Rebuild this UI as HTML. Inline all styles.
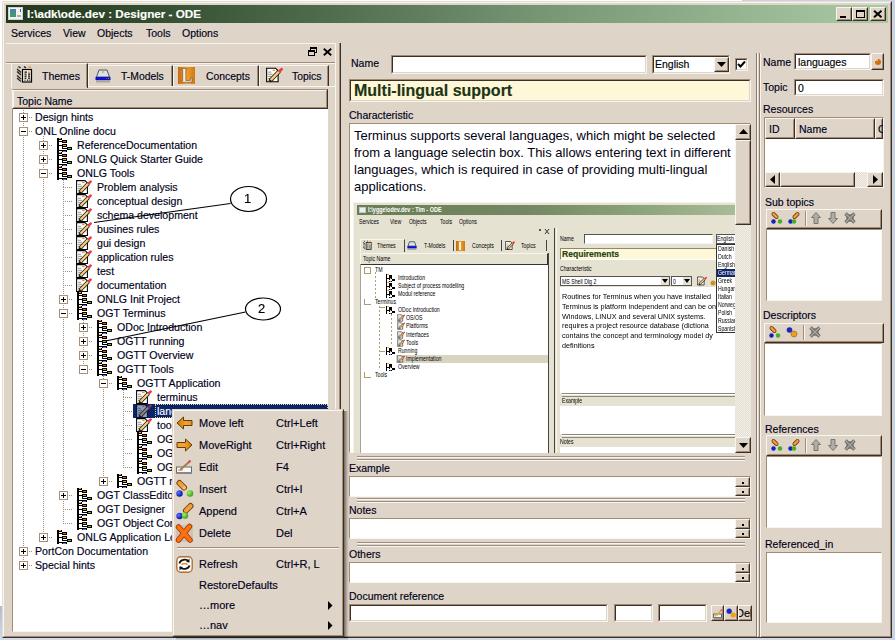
<!DOCTYPE html>
<html><head><meta charset="utf-8">
<style>
*{box-sizing:border-box;margin:0;padding:0}
html,body{width:895px;height:640px;overflow:hidden;background:#fff;font-family:"Liberation Sans",sans-serif;font-size:11px;color:#000018}
.a{position:absolute}
.t{position:absolute;white-space:nowrap;line-height:14px;-webkit-text-stroke:0.15px currentColor}
svg{position:absolute;overflow:visible}
</style></head><body>
<svg width="0" height="0" style="position:absolute">
<defs>
<symbol id="hier" viewBox="0 0 15 14" shape-rendering="crispEdges">
 <rect x="0" y="0" width="1.5" height="14" fill="#000"/>
 <rect x="0" y="0" width="5" height="2" fill="#000"/><rect x="2" y="0" width="2" height="1" fill="#f8a020"/>
 <rect x="2" y="3" width="3" height="1" fill="#000"/>
 <rect x="5" y="2" width="5" height="3" fill="#000"/><rect x="6" y="3" width="3" height="1" fill="#f05020"/>
 <rect x="2" y="7" width="3" height="1" fill="#000"/>
 <rect x="5" y="6" width="5" height="3" fill="#000"/><rect x="6" y="7" width="3" height="1" fill="#d8a818"/>
 <rect x="5" y="9" width="1" height="2" fill="#000"/><rect x="6" y="10" width="4" height="1" fill="#000"/>
 <rect x="10" y="9" width="5" height="3" fill="#000"/><rect x="11" y="10" width="3" height="1" fill="#88b020"/>
 <rect x="2" y="12" width="3" height="1" fill="#000"/>
 <rect x="5" y="12" width="5" height="2" fill="#000"/><rect x="6" y="13" width="3" height="1" fill="#5080f0"/>
</symbol>
<symbol id="note" viewBox="0 0 16 14">
 <path d="M0.6 0.6 H9 L11.4 3 V13.4 H0.6 Z" fill="#fff" stroke="#000" stroke-width="1.05"/>
 <path d="M2 4.3h3M2 6.3h4M2 8.3h3.5M2 10.3h3M2 12.3h5" stroke="#8a8a8a" stroke-width="0.9"/>
 <path d="M6.2 2.6h2.4" stroke="#f08010" stroke-width="1"/>
 <path d="M3.8 12.4 L12.6 3.4" stroke="#2a2010" stroke-width="3.8"/>
 <path d="M4.4 11.8 L12.4 3.6" stroke="#f6d080" stroke-width="2.2"/>
 <path d="M3.4 13.2 L4.6 12" stroke="#111" stroke-width="1.8"/>
 <path d="M12.2 4 L13.2 3" stroke="#8090a0" stroke-width="2.6"/>
 <path d="M13 3.2 L14.6 1.6" stroke="#e83a4a" stroke-width="2.6" stroke-linecap="round"/>
</symbol>
<symbol id="ledger" viewBox="0 0 18 18">
<path d="M2 4 L6 7.5 M2 6.5 L6 10 M2 10.5 L6 14 M2 13 L6 16.5" stroke="#222" stroke-width="1.3"/>
<path d="M2 2.5 L6 6 M2 8.5 L6 12 M2 11.8 L6 15.3" stroke="#f0a050" stroke-width="0.8" stroke-dasharray="1 1"/>
<path d="M3.5 1.5 L5.5 3 M9 1.5 L11 3" stroke="#222" stroke-width="1.4"/>
<path d="M13.5 2.2 H16" stroke="#f08a10" stroke-width="1.4"/>
<rect x="7.5" y="4.5" width="9" height="12.5" fill="#f6eee0" stroke="#000" stroke-width="1.2"/>
<path d="M9.5 7.2h2.5M9.5 9.2h2M13 9.2h2.2M9.5 11.2h2.2M13 11.2h2M9.5 13.2h2M13 13.2h2.2M9.5 15.2h1M11.8 15.2h1.5M14.3 15.2h1" stroke="#111" stroke-width="1.2"/>
<path d="M13 7.2h2.2" stroke="#f08a10" stroke-width="1.3"/>
</symbol>
</defs></svg>

<div class="a" style="left:0px;top:606px;width:2px;height:34px;background:linear-gradient(#b0bccc,#d0d8e6)"></div>
<div class="a" style="left:0px;top:638px;width:895px;height:2px;background:#d0dae8"></div>
<div class="a" style="left:892px;top:0px;width:3px;height:640px;background:#c8d4e6"></div>
<div class="a" style="left:742px;top:0px;width:153px;height:1px;background:#c8d4e6"></div>
<div class="a" style="left:2px;top:1px;width:890px;height:637px;background:#ded4c8;border-style:solid;border-width:1px;border-color:#e6ddd2 #3a3028 #3a3028 #e6ddd2"></div>
<div class="a" style="left:3px;top:2px;width:888px;height:635px;border-style:solid;border-width:1px;border-color:#f8f4ee #a48c74 #a48c74 #f8f4ee"></div>
<div class="a" style="left:6px;top:5px;width:882px;height:18px;background:linear-gradient(90deg,#22361e 0%,#2c4428 10%,#4e6a4c 35%,#759573 60%,#98b894 85%,#aacaa4 100%)"></div>
<div class="a" style="left:8px;top:7px;width:15px;height:13px;background:#f2f2f2;border:1px solid #d0d0d0"></div>
<div class="a" style="left:10px;top:9px;width:6px;height:8px;background:linear-gradient(#4a80b0,#40a060)"></div>
<div class="a" style="left:20px;top:9px;width:1px;height:3px;background:#2a60c0"></div>
<div class="a" style="left:17px;top:15px;width:4px;height:2px;background:#b0b0b0"></div>
<div class="t" style="left:27px;top:7px;color:#fff;font-weight:bold;font-size:11.7px">I:\adk\ode.dev : Designer - ODE</div>
<div class="a" style="left:836px;top:7px;width:16px;height:14px;background:#ded4c8;border-style:solid;border-width:1px;border-color:#f8f4ee #3a3028 #3a3028 #f8f4ee"></div>
<div class="a" style="left:837px;top:8px;width:14px;height:12px;border-style:solid;border-width:1px;border-color:#ded4c8 #a48c74 #a48c74 #ded4c8"></div>
<div class="a" style="left:852px;top:7px;width:16px;height:14px;background:#ded4c8;border-style:solid;border-width:1px;border-color:#f8f4ee #3a3028 #3a3028 #f8f4ee"></div>
<div class="a" style="left:853px;top:8px;width:14px;height:12px;border-style:solid;border-width:1px;border-color:#ded4c8 #a48c74 #a48c74 #ded4c8"></div>
<div class="a" style="left:870px;top:7px;width:16px;height:14px;background:#ded4c8;border-style:solid;border-width:1px;border-color:#f8f4ee #3a3028 #3a3028 #f8f4ee"></div>
<div class="a" style="left:871px;top:8px;width:14px;height:12px;border-style:solid;border-width:1px;border-color:#ded4c8 #a48c74 #a48c74 #ded4c8"></div>
<div class="a" style="left:840px;top:16px;width:6px;height:2px;background:#000"></div>
<div class="a" style="left:856px;top:10px;width:9px;height:8px;border:1px solid #000;border-top-width:2px"></div>
<svg style="left:873px;top:10px" width="10" height="8"><path d="M1 0.8 L8.5 7.2 M8.5 0.8 L1 7.2" stroke="#000" stroke-width="2"/></svg>
<div class="t" style="left:11px;top:26px;font-size:10.5px">Services</div>
<div class="t" style="left:63px;top:26px;font-size:10.5px">View</div>
<div class="t" style="left:97px;top:26px;font-size:10.5px">Objects</div>
<div class="t" style="left:146px;top:26px;font-size:10.5px">Tools</div>
<div class="t" style="left:182px;top:26px;font-size:10.5px">Options</div>
<div class="a" style="left:6px;top:43px;width:330px;height:1px;background:#f8f4ee"></div>
<div class="a" style="left:335px;top:43px;width:1px;height:594px;background:#f8f4ee"></div>
<svg style="left:308px;top:47px" width="9" height="10" shape-rendering="crispEdges"><rect x="2" y="0" width="7" height="2" fill="#000"/><rect x="8" y="0" width="1" height="6" fill="#000"/><rect x="6" y="5" width="3" height="1" fill="#000"/><rect x="0" y="3" width="7" height="2" fill="#000"/><rect x="0" y="3" width="1" height="6" fill="#000"/><rect x="6" y="3" width="1" height="6" fill="#000"/><rect x="0" y="8" width="7" height="1" fill="#000"/><rect x="2" y="2" width="1" height="1" fill="#000"/></svg>
<svg style="left:323px;top:48px" width="9" height="8"><path d="M0.8 0.8 L8.2 7.2 M8.2 0.8 L0.8 7.2" stroke="#000" stroke-width="1.8"/></svg>
<div class="a" style="left:6px;top:62px;width:329px;height:1px;background:#a48c74"></div>
<div class="a" style="left:6px;top:63px;width:329px;height:1px;background:#f8f4ee"></div>
<div class="a" style="left:88px;top:65px;width:85px;height:21px;background:#ded4c8;border-style:solid;border-width:1px 1px 0 1px;border-color:#f8f4ee #3a3028 #ded4c8 #f8f4ee"></div>
<div class="a" style="left:171px;top:66px;width:1px;height:20px;background:#a48c74"></div>
<div class="a" style="left:173px;top:65px;width:86px;height:21px;background:#ded4c8;border-style:solid;border-width:1px 1px 0 1px;border-color:#f8f4ee #3a3028 #ded4c8 #f8f4ee"></div>
<div class="a" style="left:257px;top:66px;width:1px;height:20px;background:#a48c74"></div>
<div class="a" style="left:259px;top:65px;width:70px;height:21px;background:#ded4c8;border-style:solid;border-width:1px 1px 0 1px;border-color:#f8f4ee #3a3028 #ded4c8 #f8f4ee"></div>
<div class="a" style="left:327px;top:66px;width:1px;height:20px;background:#a48c74"></div>
<div class="a" style="left:11px;top:63px;width:77px;height:25px;background:#ded4c8;border-style:solid;border-width:1px 1px 0 1px;border-color:#f8f4ee #3a3028 #ded4c8 #f8f4ee"></div>
<div class="a" style="left:86px;top:64px;width:1px;height:23px;background:#a48c74"></div>
<div class="a" style="left:88px;top:86px;width:247px;height:1px;background:#f8f4ee"></div>
<svg style="left:15px;top:65px" width="18" height="18" viewBox="0 0 18 18">
<path d="M2 4 L6 7.5 M2 6.5 L6 10 M2 10.5 L6 14 M2 13 L6 16.5" stroke="#222" stroke-width="1.3"/>
<path d="M2 2.5 L6 6 M2 8.5 L6 12 M2 11.8 L6 15.3" stroke="#f0a050" stroke-width="0.8" stroke-dasharray="1 1"/>
<path d="M3.5 1.5 L5.5 3 M9 1.5 L11 3" stroke="#222" stroke-width="1.4"/>
<path d="M13.5 2.2 H16" stroke="#f08a10" stroke-width="1.4"/>
<rect x="7.5" y="4.5" width="9" height="12.5" fill="#f6eee0" stroke="#000" stroke-width="1.2"/>
<path d="M9.5 7.2h2.5M9.5 9.2h2M13 9.2h2.2M9.5 11.2h2.2M13 11.2h2M9.5 13.2h2M13 13.2h2.2M9.5 15.2h1M11.8 15.2h1.5M14.3 15.2h1" stroke="#111" stroke-width="1.2"/>
<path d="M13 7.2h2.2" stroke="#f08a10" stroke-width="1.3"/>
</svg>
<div class="t" style="left:42px;top:69px;font-size:10.5px">Themes</div>
<svg style="left:95px;top:69px" width="16" height="14" viewBox="0 0 16 14">
<path d="M4 1 H12 L14.5 8 H1.5 Z" fill="#d8e4ea" stroke="#555" stroke-width="1"/>
<ellipse cx="8" cy="3" rx="1.5" ry="0.8" fill="#e0a040"/>
<rect x="0.5" y="8" width="15" height="3" fill="#1010d0"/>
<rect x="11" y="9" width="1.2" height="1" fill="#e02020"/><rect x="13" y="9" width="1.2" height="1" fill="#20d020"/>
<rect x="1" y="11" width="14" height="2.5" fill="#888" opacity="0.6"/>
</svg>
<div class="t" style="left:121px;top:70px;font-size:10.4px">T-Models</div>
<svg style="left:178px;top:67px" width="17" height="17" viewBox="0 0 17 17">
<defs><linearGradient id="cg" x1="0" x2="1"><stop offset="0" stop-color="#c86808"/><stop offset=".5" stop-color="#f0a030"/><stop offset="1" stop-color="#d07810"/></linearGradient></defs>
<rect x="0" y="0" width="17" height="17" fill="url(#cg)"/>
<path d="M3.5 1.5 H9 V2.6 H7.8 V13.6 H12.2 L13 11 H14.2 L13.8 15.2 H3.5 V14.1 H4.7 V2.6 H3.5 Z" fill="#f4f0e8" stroke="#6a4a2a" stroke-width="0.6"/>
</svg>
<div class="t" style="left:206px;top:70px;font-size:10.4px">Concepts</div>
<svg style="left:266px;top:67px" width="17" height="16"><use href="#note" width="17" height="16"/></svg>
<div class="t" style="left:292px;top:70px;font-size:10.4px">Topics</div>
<div class="a" style="left:12px;top:89px;width:316px;height:20px;background:#ded4c8;border-style:solid;border-width:1px;border-color:#a48c74 #3a3028 #3a3028 #f8f4ee"></div>
<div class="a" style="left:13px;top:90px;width:314px;height:18px;border-style:solid;border-width:1px;border-color:#f8f4ee #a48c74 #a48c74 #f8f4ee"></div>
<div class="t" style="left:17px;top:94px;font-size:10.5px">Topic Name</div>
<div class="a" style="left:12px;top:109px;width:316px;height:523px;background:#fff;border-left:1px solid #a48c74;border-bottom:1px solid #f8f4ee"></div>
<div class="a" style="left:23px;top:110px;width:1px;height:7px;background:repeating-linear-gradient(180deg,#a08c78 0 1px,transparent 1px 2px)"></div>
<div class="a" style="left:23px;top:117px;width:10px;height:1px;background:repeating-linear-gradient(90deg,#a08c78 0 1px,transparent 1px 2px)"></div>
<div class="a" style="left:23px;top:117px;width:1px;height:14px;background:repeating-linear-gradient(180deg,#a08c78 0 1px,transparent 1px 2px)"></div>
<div class="a" style="left:23px;top:131px;width:10px;height:1px;background:repeating-linear-gradient(90deg,#a08c78 0 1px,transparent 1px 2px)"></div>
<div class="a" style="left:43px;top:136px;width:1px;height:9px;background:repeating-linear-gradient(180deg,#a08c78 0 1px,transparent 1px 2px)"></div>
<div class="a" style="left:43px;top:145px;width:10px;height:1px;background:repeating-linear-gradient(90deg,#a08c78 0 1px,transparent 1px 2px)"></div>
<div class="a" style="left:43px;top:145px;width:1px;height:14px;background:repeating-linear-gradient(180deg,#a08c78 0 1px,transparent 1px 2px)"></div>
<div class="a" style="left:43px;top:159px;width:10px;height:1px;background:repeating-linear-gradient(90deg,#a08c78 0 1px,transparent 1px 2px)"></div>
<div class="a" style="left:43px;top:159px;width:1px;height:14px;background:repeating-linear-gradient(180deg,#a08c78 0 1px,transparent 1px 2px)"></div>
<div class="a" style="left:43px;top:173px;width:10px;height:1px;background:repeating-linear-gradient(90deg,#a08c78 0 1px,transparent 1px 2px)"></div>
<div class="a" style="left:63px;top:178px;width:1px;height:9px;background:repeating-linear-gradient(180deg,#a08c78 0 1px,transparent 1px 2px)"></div>
<div class="a" style="left:63px;top:187px;width:10px;height:1px;background:repeating-linear-gradient(90deg,#a08c78 0 1px,transparent 1px 2px)"></div>
<div class="a" style="left:63px;top:187px;width:1px;height:14px;background:repeating-linear-gradient(180deg,#a08c78 0 1px,transparent 1px 2px)"></div>
<div class="a" style="left:63px;top:201px;width:10px;height:1px;background:repeating-linear-gradient(90deg,#a08c78 0 1px,transparent 1px 2px)"></div>
<div class="a" style="left:63px;top:201px;width:1px;height:14px;background:repeating-linear-gradient(180deg,#a08c78 0 1px,transparent 1px 2px)"></div>
<div class="a" style="left:63px;top:215px;width:10px;height:1px;background:repeating-linear-gradient(90deg,#a08c78 0 1px,transparent 1px 2px)"></div>
<div class="a" style="left:63px;top:215px;width:1px;height:14px;background:repeating-linear-gradient(180deg,#a08c78 0 1px,transparent 1px 2px)"></div>
<div class="a" style="left:63px;top:229px;width:10px;height:1px;background:repeating-linear-gradient(90deg,#a08c78 0 1px,transparent 1px 2px)"></div>
<div class="a" style="left:63px;top:229px;width:1px;height:14px;background:repeating-linear-gradient(180deg,#a08c78 0 1px,transparent 1px 2px)"></div>
<div class="a" style="left:63px;top:243px;width:10px;height:1px;background:repeating-linear-gradient(90deg,#a08c78 0 1px,transparent 1px 2px)"></div>
<div class="a" style="left:63px;top:243px;width:1px;height:14px;background:repeating-linear-gradient(180deg,#a08c78 0 1px,transparent 1px 2px)"></div>
<div class="a" style="left:63px;top:257px;width:10px;height:1px;background:repeating-linear-gradient(90deg,#a08c78 0 1px,transparent 1px 2px)"></div>
<div class="a" style="left:63px;top:257px;width:1px;height:14px;background:repeating-linear-gradient(180deg,#a08c78 0 1px,transparent 1px 2px)"></div>
<div class="a" style="left:63px;top:271px;width:10px;height:1px;background:repeating-linear-gradient(90deg,#a08c78 0 1px,transparent 1px 2px)"></div>
<div class="a" style="left:63px;top:271px;width:1px;height:14px;background:repeating-linear-gradient(180deg,#a08c78 0 1px,transparent 1px 2px)"></div>
<div class="a" style="left:63px;top:285px;width:10px;height:1px;background:repeating-linear-gradient(90deg,#a08c78 0 1px,transparent 1px 2px)"></div>
<div class="a" style="left:63px;top:285px;width:1px;height:14px;background:repeating-linear-gradient(180deg,#a08c78 0 1px,transparent 1px 2px)"></div>
<div class="a" style="left:63px;top:299px;width:10px;height:1px;background:repeating-linear-gradient(90deg,#a08c78 0 1px,transparent 1px 2px)"></div>
<div class="a" style="left:63px;top:299px;width:1px;height:14px;background:repeating-linear-gradient(180deg,#a08c78 0 1px,transparent 1px 2px)"></div>
<div class="a" style="left:63px;top:313px;width:10px;height:1px;background:repeating-linear-gradient(90deg,#a08c78 0 1px,transparent 1px 2px)"></div>
<div class="a" style="left:83px;top:318px;width:1px;height:9px;background:repeating-linear-gradient(180deg,#a08c78 0 1px,transparent 1px 2px)"></div>
<div class="a" style="left:83px;top:327px;width:10px;height:1px;background:repeating-linear-gradient(90deg,#a08c78 0 1px,transparent 1px 2px)"></div>
<div class="a" style="left:83px;top:327px;width:1px;height:14px;background:repeating-linear-gradient(180deg,#a08c78 0 1px,transparent 1px 2px)"></div>
<div class="a" style="left:83px;top:341px;width:10px;height:1px;background:repeating-linear-gradient(90deg,#a08c78 0 1px,transparent 1px 2px)"></div>
<div class="a" style="left:83px;top:341px;width:1px;height:14px;background:repeating-linear-gradient(180deg,#a08c78 0 1px,transparent 1px 2px)"></div>
<div class="a" style="left:83px;top:355px;width:10px;height:1px;background:repeating-linear-gradient(90deg,#a08c78 0 1px,transparent 1px 2px)"></div>
<div class="a" style="left:83px;top:355px;width:1px;height:14px;background:repeating-linear-gradient(180deg,#a08c78 0 1px,transparent 1px 2px)"></div>
<div class="a" style="left:83px;top:369px;width:10px;height:1px;background:repeating-linear-gradient(90deg,#a08c78 0 1px,transparent 1px 2px)"></div>
<div class="a" style="left:103px;top:374px;width:1px;height:9px;background:repeating-linear-gradient(180deg,#a08c78 0 1px,transparent 1px 2px)"></div>
<div class="a" style="left:103px;top:383px;width:10px;height:1px;background:repeating-linear-gradient(90deg,#a08c78 0 1px,transparent 1px 2px)"></div>
<div class="a" style="left:123px;top:388px;width:1px;height:9px;background:repeating-linear-gradient(180deg,#a08c78 0 1px,transparent 1px 2px)"></div>
<div class="a" style="left:123px;top:397px;width:10px;height:1px;background:repeating-linear-gradient(90deg,#a08c78 0 1px,transparent 1px 2px)"></div>
<div class="a" style="left:123px;top:397px;width:1px;height:14px;background:repeating-linear-gradient(180deg,#a08c78 0 1px,transparent 1px 2px)"></div>
<div class="a" style="left:123px;top:411px;width:10px;height:1px;background:repeating-linear-gradient(90deg,#a08c78 0 1px,transparent 1px 2px)"></div>
<div class="a" style="left:123px;top:411px;width:1px;height:14px;background:repeating-linear-gradient(180deg,#a08c78 0 1px,transparent 1px 2px)"></div>
<div class="a" style="left:123px;top:425px;width:10px;height:1px;background:repeating-linear-gradient(90deg,#a08c78 0 1px,transparent 1px 2px)"></div>
<div class="a" style="left:123px;top:425px;width:1px;height:14px;background:repeating-linear-gradient(180deg,#a08c78 0 1px,transparent 1px 2px)"></div>
<div class="a" style="left:123px;top:439px;width:10px;height:1px;background:repeating-linear-gradient(90deg,#a08c78 0 1px,transparent 1px 2px)"></div>
<div class="a" style="left:123px;top:439px;width:1px;height:14px;background:repeating-linear-gradient(180deg,#a08c78 0 1px,transparent 1px 2px)"></div>
<div class="a" style="left:123px;top:453px;width:10px;height:1px;background:repeating-linear-gradient(90deg,#a08c78 0 1px,transparent 1px 2px)"></div>
<div class="a" style="left:123px;top:453px;width:1px;height:14px;background:repeating-linear-gradient(180deg,#a08c78 0 1px,transparent 1px 2px)"></div>
<div class="a" style="left:123px;top:467px;width:10px;height:1px;background:repeating-linear-gradient(90deg,#a08c78 0 1px,transparent 1px 2px)"></div>
<div class="a" style="left:103px;top:383px;width:1px;height:98px;background:repeating-linear-gradient(180deg,#a08c78 0 1px,transparent 1px 2px)"></div>
<div class="a" style="left:103px;top:481px;width:10px;height:1px;background:repeating-linear-gradient(90deg,#a08c78 0 1px,transparent 1px 2px)"></div>
<div class="a" style="left:63px;top:313px;width:1px;height:182px;background:repeating-linear-gradient(180deg,#a08c78 0 1px,transparent 1px 2px)"></div>
<div class="a" style="left:63px;top:495px;width:10px;height:1px;background:repeating-linear-gradient(90deg,#a08c78 0 1px,transparent 1px 2px)"></div>
<div class="a" style="left:63px;top:495px;width:1px;height:14px;background:repeating-linear-gradient(180deg,#a08c78 0 1px,transparent 1px 2px)"></div>
<div class="a" style="left:63px;top:509px;width:10px;height:1px;background:repeating-linear-gradient(90deg,#a08c78 0 1px,transparent 1px 2px)"></div>
<div class="a" style="left:63px;top:509px;width:1px;height:14px;background:repeating-linear-gradient(180deg,#a08c78 0 1px,transparent 1px 2px)"></div>
<div class="a" style="left:63px;top:523px;width:10px;height:1px;background:repeating-linear-gradient(90deg,#a08c78 0 1px,transparent 1px 2px)"></div>
<div class="a" style="left:43px;top:173px;width:1px;height:364px;background:repeating-linear-gradient(180deg,#a08c78 0 1px,transparent 1px 2px)"></div>
<div class="a" style="left:43px;top:537px;width:10px;height:1px;background:repeating-linear-gradient(90deg,#a08c78 0 1px,transparent 1px 2px)"></div>
<div class="a" style="left:23px;top:131px;width:1px;height:420px;background:repeating-linear-gradient(180deg,#a08c78 0 1px,transparent 1px 2px)"></div>
<div class="a" style="left:23px;top:551px;width:10px;height:1px;background:repeating-linear-gradient(90deg,#a08c78 0 1px,transparent 1px 2px)"></div>
<div class="a" style="left:23px;top:551px;width:1px;height:14px;background:repeating-linear-gradient(180deg,#a08c78 0 1px,transparent 1px 2px)"></div>
<div class="a" style="left:23px;top:565px;width:10px;height:1px;background:repeating-linear-gradient(90deg,#a08c78 0 1px,transparent 1px 2px)"></div>
<div class="a" style="left:19px;top:113px;width:9px;height:9px;background:#fff;border:1px solid #a89078"></div>
<div class="a" style="left:21px;top:117px;width:5px;height:1px;background:#000"></div>
<div class="a" style="left:23px;top:115px;width:1px;height:5px;background:#000"></div>
<div class="t" style="left:35px;top:110px;font-size:10.6px">Design hints</div>
<div class="a" style="left:19px;top:127px;width:9px;height:9px;background:#fff;border:1px solid #a89078"></div>
<div class="a" style="left:21px;top:131px;width:5px;height:1px;background:#000"></div>
<div class="t" style="left:35px;top:124px;font-size:10.6px">ONL Online docu</div>
<div class="a" style="left:39px;top:141px;width:9px;height:9px;background:#fff;border:1px solid #a89078"></div>
<div class="a" style="left:41px;top:145px;width:5px;height:1px;background:#000"></div>
<div class="a" style="left:43px;top:143px;width:1px;height:5px;background:#000"></div>
<svg style="left:57px;top:138px" width="15" height="14"><use href="#hier" width="15" height="14"/></svg>
<div class="t" style="left:77px;top:138px;font-size:10.6px">ReferenceDocumentation</div>
<div class="a" style="left:39px;top:155px;width:9px;height:9px;background:#fff;border:1px solid #a89078"></div>
<div class="a" style="left:41px;top:159px;width:5px;height:1px;background:#000"></div>
<div class="a" style="left:43px;top:157px;width:1px;height:5px;background:#000"></div>
<svg style="left:57px;top:152px" width="15" height="14"><use href="#hier" width="15" height="14"/></svg>
<div class="t" style="left:77px;top:152px;font-size:10.6px">ONLG Quick Starter Guide</div>
<div class="a" style="left:39px;top:169px;width:9px;height:9px;background:#fff;border:1px solid #a89078"></div>
<div class="a" style="left:41px;top:173px;width:5px;height:1px;background:#000"></div>
<svg style="left:57px;top:166px" width="15" height="14"><use href="#hier" width="15" height="14"/></svg>
<div class="t" style="left:77px;top:166px;font-size:10.6px">ONLG Tools</div>
<svg style="left:76px;top:180px" width="16" height="14"><use href="#note" width="16" height="14"/></svg>
<div class="t" style="left:97px;top:180px;font-size:10.6px">Problem analysis</div>
<svg style="left:76px;top:194px" width="16" height="14"><use href="#note" width="16" height="14"/></svg>
<div class="t" style="left:97px;top:194px;font-size:10.6px">conceptual design</div>
<svg style="left:76px;top:208px" width="16" height="14"><use href="#note" width="16" height="14"/></svg>
<div class="t" style="left:97px;top:208px;font-size:10.6px">schema development</div>
<svg style="left:76px;top:222px" width="16" height="14"><use href="#note" width="16" height="14"/></svg>
<div class="t" style="left:97px;top:222px;font-size:10.6px">busines rules</div>
<svg style="left:76px;top:236px" width="16" height="14"><use href="#note" width="16" height="14"/></svg>
<div class="t" style="left:97px;top:236px;font-size:10.6px">gui design</div>
<svg style="left:76px;top:250px" width="16" height="14"><use href="#note" width="16" height="14"/></svg>
<div class="t" style="left:97px;top:250px;font-size:10.6px">application rules</div>
<svg style="left:76px;top:264px" width="16" height="14"><use href="#note" width="16" height="14"/></svg>
<div class="t" style="left:97px;top:264px;font-size:10.6px">test</div>
<svg style="left:76px;top:278px" width="16" height="14"><use href="#note" width="16" height="14"/></svg>
<div class="t" style="left:97px;top:278px;font-size:10.6px">documentation</div>
<div class="a" style="left:59px;top:295px;width:9px;height:9px;background:#fff;border:1px solid #a89078"></div>
<div class="a" style="left:61px;top:299px;width:5px;height:1px;background:#000"></div>
<div class="a" style="left:63px;top:297px;width:1px;height:5px;background:#000"></div>
<svg style="left:77px;top:292px" width="15" height="14"><use href="#hier" width="15" height="14"/></svg>
<div class="t" style="left:97px;top:292px;font-size:10.6px">ONLG Init Project</div>
<div class="a" style="left:59px;top:309px;width:9px;height:9px;background:#fff;border:1px solid #a89078"></div>
<div class="a" style="left:61px;top:313px;width:5px;height:1px;background:#000"></div>
<svg style="left:77px;top:306px" width="15" height="14"><use href="#hier" width="15" height="14"/></svg>
<div class="t" style="left:97px;top:306px;font-size:10.6px">OGT Terminus</div>
<div class="a" style="left:79px;top:323px;width:9px;height:9px;background:#fff;border:1px solid #a89078"></div>
<div class="a" style="left:81px;top:327px;width:5px;height:1px;background:#000"></div>
<div class="a" style="left:83px;top:325px;width:1px;height:5px;background:#000"></div>
<svg style="left:97px;top:320px" width="15" height="14"><use href="#hier" width="15" height="14"/></svg>
<div class="t" style="left:117px;top:320px;font-size:10.6px">ODoc Introduction</div>
<div class="a" style="left:79px;top:337px;width:9px;height:9px;background:#fff;border:1px solid #a89078"></div>
<div class="a" style="left:81px;top:341px;width:5px;height:1px;background:#000"></div>
<div class="a" style="left:83px;top:339px;width:1px;height:5px;background:#000"></div>
<svg style="left:97px;top:334px" width="15" height="14"><use href="#hier" width="15" height="14"/></svg>
<div class="t" style="left:117px;top:334px;font-size:10.6px">OGTT running</div>
<div class="a" style="left:79px;top:351px;width:9px;height:9px;background:#fff;border:1px solid #a89078"></div>
<div class="a" style="left:81px;top:355px;width:5px;height:1px;background:#000"></div>
<div class="a" style="left:83px;top:353px;width:1px;height:5px;background:#000"></div>
<svg style="left:97px;top:348px" width="15" height="14"><use href="#hier" width="15" height="14"/></svg>
<div class="t" style="left:117px;top:348px;font-size:10.6px">OGTT Overview</div>
<div class="a" style="left:79px;top:365px;width:9px;height:9px;background:#fff;border:1px solid #a89078"></div>
<div class="a" style="left:81px;top:369px;width:5px;height:1px;background:#000"></div>
<svg style="left:97px;top:362px" width="15" height="14"><use href="#hier" width="15" height="14"/></svg>
<div class="t" style="left:117px;top:362px;font-size:10.6px">OGTT Tools</div>
<div class="a" style="left:99px;top:379px;width:9px;height:9px;background:#fff;border:1px solid #a89078"></div>
<div class="a" style="left:101px;top:383px;width:5px;height:1px;background:#000"></div>
<svg style="left:117px;top:376px" width="15" height="14"><use href="#hier" width="15" height="14"/></svg>
<div class="t" style="left:137px;top:376px;font-size:10.6px">OGTT Application</div>
<svg style="left:136px;top:390px" width="16" height="14"><use href="#note" width="16" height="14"/></svg>
<div class="t" style="left:157px;top:390px;font-size:10.6px">terminus</div>
<div class="a" style="left:133px;top:404px;width:195px;height:14px;background:#0a246a"></div>
<svg style="left:136px;top:404px" width="16" height="14"><use href="#note" width="16" height="14"/></svg>
<div class="a" style="left:136px;top:404px;width:16px;height:14px;background:rgba(10,36,106,.45)"></div>
<div class="a" style="left:155px;top:404px;width:173px;height:14px;border:1px dotted #e8d890"></div>
<div class="t" style="left:157px;top:404px;color:#fff;font-size:10.6px">languages</div>
<svg style="left:136px;top:418px" width="16" height="14"><use href="#note" width="16" height="14"/></svg>
<div class="t" style="left:157px;top:418px;font-size:10.6px">tools</div>
<svg style="left:137px;top:432px" width="15" height="14"><use href="#hier" width="15" height="14"/></svg>
<div class="t" style="left:157px;top:432px;font-size:10.6px">OGTT a</div>
<svg style="left:137px;top:446px" width="15" height="14"><use href="#hier" width="15" height="14"/></svg>
<div class="t" style="left:157px;top:446px;font-size:10.6px">OGTT b</div>
<svg style="left:137px;top:460px" width="15" height="14"><use href="#hier" width="15" height="14"/></svg>
<div class="t" style="left:157px;top:460px;font-size:10.6px">OGTT c</div>
<div class="a" style="left:99px;top:477px;width:9px;height:9px;background:#fff;border:1px solid #a89078"></div>
<div class="a" style="left:101px;top:481px;width:5px;height:1px;background:#000"></div>
<div class="a" style="left:103px;top:479px;width:1px;height:5px;background:#000"></div>
<svg style="left:117px;top:474px" width="15" height="14"><use href="#hier" width="15" height="14"/></svg>
<div class="t" style="left:137px;top:474px;font-size:10.6px">OGTT mapping</div>
<div class="a" style="left:59px;top:491px;width:9px;height:9px;background:#fff;border:1px solid #a89078"></div>
<div class="a" style="left:61px;top:495px;width:5px;height:1px;background:#000"></div>
<div class="a" style="left:63px;top:493px;width:1px;height:5px;background:#000"></div>
<svg style="left:77px;top:488px" width="15" height="14"><use href="#hier" width="15" height="14"/></svg>
<div class="t" style="left:97px;top:488px;font-size:10.6px">OGT ClassEditor</div>
<svg style="left:77px;top:502px" width="15" height="14"><use href="#hier" width="15" height="14"/></svg>
<div class="t" style="left:97px;top:502px;font-size:10.6px">OGT Designer</div>
<svg style="left:77px;top:516px" width="15" height="14"><use href="#hier" width="15" height="14"/></svg>
<div class="t" style="left:97px;top:516px;font-size:10.6px">OGT Object Constructor</div>
<div class="a" style="left:39px;top:533px;width:9px;height:9px;background:#fff;border:1px solid #a89078"></div>
<div class="a" style="left:41px;top:537px;width:5px;height:1px;background:#000"></div>
<div class="a" style="left:43px;top:535px;width:1px;height:5px;background:#000"></div>
<svg style="left:57px;top:530px" width="15" height="14"><use href="#hier" width="15" height="14"/></svg>
<div class="t" style="left:77px;top:530px;font-size:10.6px">ONLG Application Lookup</div>
<div class="a" style="left:19px;top:547px;width:9px;height:9px;background:#fff;border:1px solid #a89078"></div>
<div class="a" style="left:21px;top:551px;width:5px;height:1px;background:#000"></div>
<div class="a" style="left:23px;top:549px;width:1px;height:5px;background:#000"></div>
<div class="t" style="left:35px;top:544px;font-size:10.6px">PortCon Documentation</div>
<div class="a" style="left:19px;top:561px;width:9px;height:9px;background:#fff;border:1px solid #a89078"></div>
<div class="a" style="left:21px;top:565px;width:5px;height:1px;background:#000"></div>
<div class="a" style="left:23px;top:563px;width:1px;height:5px;background:#000"></div>
<div class="t" style="left:35px;top:558px;font-size:10.6px">Special hints</div>
<div class="a" style="left:339px;top:43px;width:1px;height:594px;background:#a48c74"></div>
<div class="a" style="left:340px;top:43px;width:1px;height:594px;background:#3a3028"></div>
<div class="a" style="left:756px;top:53px;width:1px;height:584px;background:#8a7c70"></div>
<div class="a" style="left:757px;top:53px;width:1px;height:584px;background:#f8f4ee"></div>
<div class="a" style="left:759px;top:53px;width:1px;height:584px;background:#8a7c70"></div>
<div class="a" style="left:760px;top:53px;width:1px;height:584px;background:#f8f4ee"></div>
<div class="t" style="left:351px;top:56px;font-size:10.5px">Name</div>
<div class="a" style="left:391px;top:55px;width:256px;height:19px;background:#fff;border-style:solid;border-width:1px;border-color:#a48c74 #f8f4ee #f8f4ee #a48c74;"></div>
<div class="a" style="left:392px;top:56px;width:254px;height:17px;border-style:solid;border-width:1px;border-color:#3a3028 #ded4c8 #ded4c8 #3a3028"></div>
<div class="a" style="left:652px;top:55px;width:78px;height:19px;background:#fff;border-style:solid;border-width:1px;border-color:#a48c74 #f8f4ee #f8f4ee #a48c74;"></div>
<div class="a" style="left:653px;top:56px;width:76px;height:17px;border-style:solid;border-width:1px;border-color:#3a3028 #ded4c8 #ded4c8 #3a3028"></div>
<div class="t" style="left:655px;top:57px;font-size:10.5px;color:#000">English</div>
<div class="a" style="left:714px;top:57px;width:15px;height:15px;background:#ded4c8;border-style:solid;border-width:1px;border-color:#f8f4ee #3a3028 #3a3028 #f8f4ee"></div>
<div class="a" style="left:715px;top:58px;width:13px;height:13px;border-style:solid;border-width:1px;border-color:#ded4c8 #a48c74 #a48c74 #ded4c8"></div>
<svg style="left:717px;top:62px" width="9" height="5"><path d="M0 0h9L4.5 5z" fill="#000"/></svg>
<div class="a" style="left:735px;top:58px;width:13px;height:13px;background:#fff;border-style:solid;border-width:1px;border-color:#a48c74 #f8f4ee #f8f4ee #a48c74;"></div>
<div class="a" style="left:736px;top:59px;width:11px;height:11px;border-style:solid;border-width:1px;border-color:#3a3028 #ded4c8 #ded4c8 #3a3028"></div>
<svg style="left:737px;top:60px" width="9" height="9"><path d="M1 4 L3.5 6.5 L8 1.5" fill="none" stroke="#000" stroke-width="2"/></svg>
<div class="a" style="left:349px;top:79px;width:402px;height:23px;background:#fff8d8;border-style:solid;border-width:1px;border-color:#a48c74 #f8f4ee #f8f4ee #a48c74;"></div>
<div class="a" style="left:350px;top:80px;width:400px;height:21px;border-style:solid;border-width:1px;border-color:#3a3028 #ded4c8 #ded4c8 #3a3028"></div>
<div class="t" style="left:354px;top:83px;font-size:16px;font-weight:bold;color:#1c3414;line-height:20px;top:81px">Multi-lingual support</div>
<div class="t" style="left:349px;top:108px;font-size:10.5px">Characteristic</div>
<div class="a" style="left:349px;top:123px;width:402px;height:330px;background:#fff;border-style:solid;border-width:1px;border-color:#a48c74 #f8f4ee #f8f4ee #a48c74"></div>
<div class="a" style="left:354px;top:127px;width:380px;font-size:13px;line-height:17px;color:#000010">Terminus supports several languages, which might be selected from a language selectin box. This allows entering text in different languages, which is required in case of providing multi-lingual applications.</div>
<div class="a" style="left:735px;top:124px;width:16px;height:329px;background:repeating-conic-gradient(#f4f0ea 0 25%,#e4dcd2 0 50%) 0 0/2px 2px"></div>
<div class="a" style="left:735px;top:124px;width:16px;height:16px;background:#ded4c8;border-style:solid;border-width:1px;border-color:#f8f4ee #3a3028 #3a3028 #f8f4ee"></div>
<div class="a" style="left:736px;top:125px;width:14px;height:14px;border-style:solid;border-width:1px;border-color:#ded4c8 #a48c74 #a48c74 #ded4c8"></div>
<svg style="left:739px;top:129px" width="9" height="5"><path d="M0 5h9L4.5 0z" fill="#000"/></svg>
<div class="a" style="left:735px;top:140px;width:16px;height:85px;background:#ded4c8;border-style:solid;border-width:1px;border-color:#f8f4ee #3a3028 #3a3028 #f8f4ee"></div>
<div class="a" style="left:736px;top:141px;width:14px;height:83px;border-style:solid;border-width:1px;border-color:#ded4c8 #a48c74 #a48c74 #ded4c8"></div>
<div class="a" style="left:735px;top:437px;width:16px;height:16px;background:#ded4c8;border-style:solid;border-width:1px;border-color:#f8f4ee #3a3028 #3a3028 #f8f4ee"></div>
<div class="a" style="left:736px;top:438px;width:14px;height:14px;border-style:solid;border-width:1px;border-color:#ded4c8 #a48c74 #a48c74 #ded4c8"></div>
<svg style="left:739px;top:443px" width="9" height="5"><path d="M0 0h9L4.5 5z" fill="#000"/></svg>
<div class="a" style="left:0;top:0;width:895px;height:640px;clip-path:inset(202px 160px 187px 353px);filter:blur(0.25px)">
<div class="a" style="left:353px;top:202px;width:382px;height:251px;background:#e6e2d2;border-top:1px solid #f4f2ea;border-left:1px solid #f4f2ea"></div>
<div class="a" style="left:357px;top:205px;width:378px;height:10px;background:linear-gradient(90deg,#6a7e56 0%,#738862 45%,#8ca47a 75%,#a8bc98 100%)"></div>
<div class="a" style="left:359px;top:207px;width:7px;height:6px;background:#e8f0f0;border:1px solid #c0c8c8"></div>
<div class="t" style="left:368px;top:205px;font-size:7px;line-height:9px;color:#000;-webkit-text-stroke:0;transform:scaleX(0.78);transform-origin:0 0;color:#fff;font-weight:bold;line-height:10px">I:\ygge\odev.dev : Tim - ODE</div>
<div class="t" style="left:359px;top:217px;font-size:7px;line-height:9px;color:#000;-webkit-text-stroke:0;transform:scaleX(0.74);transform-origin:0 0;">Services</div>
<div class="t" style="left:390px;top:217px;font-size:7px;line-height:9px;color:#000;-webkit-text-stroke:0;transform:scaleX(0.74);transform-origin:0 0;">View</div>
<div class="t" style="left:409px;top:217px;font-size:7px;line-height:9px;color:#000;-webkit-text-stroke:0;transform:scaleX(0.74);transform-origin:0 0;">Objects</div>
<div class="t" style="left:440px;top:217px;font-size:7px;line-height:9px;color:#000;-webkit-text-stroke:0;transform:scaleX(0.74);transform-origin:0 0;">Tools</div>
<div class="t" style="left:459px;top:217px;font-size:7px;line-height:9px;color:#000;-webkit-text-stroke:0;transform:scaleX(0.74);transform-origin:0 0;">Options</div>
<svg style="left:538px;top:228px" width="12" height="7"><path d="M1 1 L3 3 M3 1 L1 3" stroke="#333" stroke-width="0.8"/><path d="M7 1 L11 6 M11 1 L7 6" stroke="#333" stroke-width="1"/></svg>
<div class="a" style="left:360px;top:239px;width:45px;height:13px;background:#e6e2d2;border:1px solid #f8f6f0;border-right-color:#444;border-bottom:none"></div>
<div class="a" style="left:405px;top:240px;width:49px;height:11px;background:#e6e2d2;border-right:1px solid #444"></div>
<div class="a" style="left:454px;top:240px;width:48px;height:11px;background:#e6e2d2;border-right:1px solid #444"></div>
<div class="a" style="left:502px;top:240px;width:45px;height:11px;background:#e6e2d2;border-right:1px solid #444"></div>
<svg style="left:362px;top:240px" width="10" height="10"><use href="#ledger" width="10" height="10"/></svg>
<div class="t" style="left:377px;top:241px;font-size:7px;line-height:9px;color:#000;-webkit-text-stroke:0;transform:scaleX(0.74);transform-origin:0 0;">Themes</div>
<svg style="left:407px;top:241px" width="10" height="9" viewBox="0 0 16 14"><path d="M4 1 H12 L14.5 8 H1.5 Z" fill="#d8e4ea" stroke="#333" stroke-width="1.2"/><rect x="0.5" y="8" width="15" height="3.5" fill="#1010d0"/><rect x="1" y="11.5" width="14" height="2.5" fill="#777" opacity=".6"/></svg>
<div class="t" style="left:424px;top:241px;font-size:7px;line-height:9px;color:#000;-webkit-text-stroke:0;transform:scaleX(0.74);transform-origin:0 0;">T-Models</div>
<div class="a" style="left:456px;top:241px;width:9px;height:10px;background:linear-gradient(90deg,#c06808,#f0a030,#d07810)"></div>
<div class="a" style="left:459px;top:242px;width:2px;height:8px;background:#f4f0e8"></div>
<div class="t" style="left:472px;top:241px;font-size:7px;line-height:9px;color:#000;-webkit-text-stroke:0;transform:scaleX(0.74);transform-origin:0 0;">Concepts</div>
<svg style="left:505px;top:241px" width="10" height="9"><use href="#note" width="10" height="9"/></svg>
<div class="t" style="left:521px;top:241px;font-size:7px;line-height:9px;color:#000;-webkit-text-stroke:0;transform:scaleX(0.74);transform-origin:0 0;">Topics</div>
<div class="a" style="left:360px;top:253px;width:188px;height:12px;background:#e6e2d2;border:1px solid #f8f6f0;border-right-color:#333;border-bottom-color:#333"></div>
<div class="t" style="left:363px;top:254px;font-size:7px;line-height:9px;color:#000;-webkit-text-stroke:0;transform:scaleX(0.74);transform-origin:0 0;">Topic Name</div>
<div class="a" style="left:360px;top:265px;width:188px;height:188px;background:#fff;border-left:1px solid #a8a490"></div>
<div class="a" style="left:364px;top:267px;width:7px;height:7px;border:1px solid #a89c70"></div>
<div class="t" style="left:375px;top:265px;font-size:7px;line-height:9px;color:#000;-webkit-text-stroke:0;transform:scaleX(0.74);transform-origin:0 0;">TM</div>
<svg style="left:386px;top:274px" width="9" height="8"><use href="#hier" width="9" height="8"/></svg>
<div class="t" style="left:398px;top:273px;font-size:7px;line-height:9px;color:#000;-webkit-text-stroke:0;transform:scaleX(0.74);transform-origin:0 0;">Introduction</div>
<svg style="left:386px;top:282px" width="9" height="8"><use href="#hier" width="9" height="8"/></svg>
<div class="t" style="left:398px;top:281px;font-size:7px;line-height:9px;color:#000;-webkit-text-stroke:0;transform:scaleX(0.74);transform-origin:0 0;">Subject of process modelling</div>
<svg style="left:386px;top:290px" width="9" height="8"><use href="#hier" width="9" height="8"/></svg>
<div class="t" style="left:398px;top:289px;font-size:7px;line-height:9px;color:#000;-webkit-text-stroke:0;transform:scaleX(0.74);transform-origin:0 0;">Modul reference</div>
<div class="a" style="left:364px;top:299px;width:7px;height:6px;border-left:1px solid #a89c70;border-bottom:1px solid #a89c70"></div>
<div class="t" style="left:375px;top:297px;font-size:7px;line-height:9px;color:#000;-webkit-text-stroke:0;transform:scaleX(0.74);transform-origin:0 0;">Terminus</div>
<svg style="left:386px;top:306px" width="9" height="8"><use href="#hier" width="9" height="8"/></svg>
<div class="t" style="left:398px;top:305px;font-size:7px;line-height:9px;color:#000;-webkit-text-stroke:0;transform:scaleX(0.74);transform-origin:0 0;">ODoc Introduction</div>
<svg style="left:397px;top:314px" width="8" height="8"><use href="#note" width="8" height="8"/></svg>
<div class="t" style="left:406px;top:313px;font-size:7px;line-height:9px;color:#000;-webkit-text-stroke:0;transform:scaleX(0.74);transform-origin:0 0;">OS/OS</div>
<svg style="left:397px;top:322px" width="8" height="8"><use href="#note" width="8" height="8"/></svg>
<div class="t" style="left:406px;top:321px;font-size:7px;line-height:9px;color:#000;-webkit-text-stroke:0;transform:scaleX(0.74);transform-origin:0 0;">Platforms</div>
<svg style="left:397px;top:331px" width="8" height="8"><use href="#note" width="8" height="8"/></svg>
<div class="t" style="left:406px;top:330px;font-size:7px;line-height:9px;color:#000;-webkit-text-stroke:0;transform:scaleX(0.74);transform-origin:0 0;">Interfaces</div>
<svg style="left:397px;top:339px" width="8" height="8"><use href="#note" width="8" height="8"/></svg>
<div class="t" style="left:406px;top:338px;font-size:7px;line-height:9px;color:#000;-webkit-text-stroke:0;transform:scaleX(0.74);transform-origin:0 0;">Tools</div>
<svg style="left:386px;top:347px" width="9" height="8"><use href="#hier" width="9" height="8"/></svg>
<div class="t" style="left:398px;top:346px;font-size:7px;line-height:9px;color:#000;-webkit-text-stroke:0;transform:scaleX(0.74);transform-origin:0 0;">Running</div>
<div class="a" style="left:396px;top:355px;width:152px;height:8px;background:#d8d4c0"></div>
<svg style="left:397px;top:355px" width="8" height="8"><use href="#note" width="8" height="8"/></svg>
<div class="t" style="left:406px;top:354px;font-size:7px;line-height:9px;color:#000;-webkit-text-stroke:0;transform:scaleX(0.74);transform-origin:0 0;">Implementation</div>
<svg style="left:386px;top:363px" width="9" height="8"><use href="#hier" width="9" height="8"/></svg>
<div class="t" style="left:398px;top:362px;font-size:7px;line-height:9px;color:#000;-webkit-text-stroke:0;transform:scaleX(0.74);transform-origin:0 0;">Overview</div>
<div class="a" style="left:364px;top:372px;width:7px;height:6px;border-left:1px solid #a89c70;border-bottom:1px solid #a89c70"></div>
<div class="t" style="left:375px;top:370px;font-size:7px;line-height:9px;color:#000;-webkit-text-stroke:0;transform:scaleX(0.74);transform-origin:0 0;">Tools</div>
<div class="a" style="left:375px;top:272px;width:1px;height:28px;background:repeating-linear-gradient(180deg,#b0a070 0 2px,transparent 2px 4px)"></div>
<div class="a" style="left:379px;top:306px;width:1px;height:62px;background:repeating-linear-gradient(180deg,#b0a070 0 2px,transparent 2px 4px)"></div>
<div class="a" style="left:380px;top:307px;width:5px;height:1px;background:#b0a070"></div>
<div class="a" style="left:380px;top:351px;width:5px;height:1px;background:#b0a070"></div>
<div class="a" style="left:391px;top:314px;width:1px;height:30px;background:repeating-linear-gradient(180deg,#b0a070 0 2px,transparent 2px 4px)"></div>
<div class="a" style="left:548px;top:253px;width:1px;height:200px;background:#444"></div>
<div class="a" style="left:554px;top:228px;width:1px;height:225px;background:#444"></div>
<div class="a" style="left:556px;top:228px;width:1px;height:225px;background:#f8f6f0"></div>
<div class="t" style="left:560px;top:234px;font-size:7px;line-height:9px;color:#000;-webkit-text-stroke:0;transform:scaleX(0.74);transform-origin:0 0;">Name</div>
<div class="a" style="left:584px;top:234px;width:129px;height:10px;background:#fff;border:1px solid #555;border-right-color:#f4f4f4;border-bottom-color:#f4f4f4"></div>
<div class="a" style="left:716px;top:234px;width:19px;height:10px;background:#fff;border:1px solid #555;border-right:none"></div>
<div class="t" style="left:717px;top:234px;font-size:7px;line-height:9px;color:#000;-webkit-text-stroke:0;transform:scaleX(0.74);transform-origin:0 0;color:#000">English</div>
<div class="a" style="left:560px;top:248px;width:156px;height:12px;background:#fef8d8;border:1px solid #8a8a70;border-right:none;border-bottom-color:#fff"></div>
<div class="t" style="left:562px;top:248px;font-size:9.5px;line-height:12px;color:#1c4010;font-weight:bold;transform:scaleX(.9);transform-origin:0 0">Requirements</div>
<div class="t" style="left:560px;top:264px;font-size:7px;line-height:9px;color:#000;-webkit-text-stroke:0;transform:scaleX(0.74);transform-origin:0 0;">Characteristic</div>
<div class="a" style="left:560px;top:276px;width:110px;height:10px;background:#fff;border:1px solid #555"></div>
<div class="t" style="left:562px;top:277px;font-size:7px;line-height:9px;color:#000;-webkit-text-stroke:0;transform:scaleX(0.74);transform-origin:0 0;color:#000">MS Shell Dlg 2</div>
<div class="a" style="left:661px;top:277px;width:8px;height:8px;background:#e6e2d2"></div>
<svg style="left:662px;top:279px" width="6" height="4"><path d="M0 0h6L3 4z" fill="#000"/></svg>
<div class="a" style="left:671px;top:276px;width:21px;height:10px;background:#fff;border:1px solid #555"></div>
<div class="t" style="left:673px;top:277px;font-size:7px;line-height:9px;color:#000;-webkit-text-stroke:0;transform:scaleX(0.74);transform-origin:0 0;color:#000">0</div>
<div class="a" style="left:683px;top:277px;width:8px;height:8px;background:#e6e2d2"></div>
<svg style="left:684px;top:279px" width="6" height="4"><path d="M0 0h6L3 4z" fill="#000"/></svg>
<svg style="left:697px;top:276px" width="10" height="10"><use href="#note" width="10" height="10"/></svg>
<svg style="left:710px;top:277px" width="6" height="9"><circle cx="3" cy="6" r="2.5" fill="#d09020"/></svg>
<div class="a" style="left:560px;top:287px;width:175px;height:106px;background:#fff"></div>
<div class="a" style="left:562px;top:292px;width:200px;font-size:7.6px;line-height:9.8px;color:#000;transform:scaleX(.95);transform-origin:0 0">Routines for Terminus when you have installed<br>Terminus is platform independent and can be on<br>Windows, LINUX and several UNIX systems.<br>requires a project resource database (dictiona<br>contains the concept and terminology model dy<br>definitions</div>
<div class="a" style="left:716px;top:244px;width:19px;height:89px;background:#fff;border:1px solid #333;border-right:none"></div>
<div class="t" style="left:718px;top:244px;font-size:7px;line-height:9px;color:#000;-webkit-text-stroke:0;transform:scaleX(0.74);transform-origin:0 0;color:#000">Danish</div>
<div class="t" style="left:718px;top:252px;font-size:7px;line-height:9px;color:#000;-webkit-text-stroke:0;transform:scaleX(0.74);transform-origin:0 0;color:#000">Dutch</div>
<div class="t" style="left:718px;top:260px;font-size:7px;line-height:9px;color:#000;-webkit-text-stroke:0;transform:scaleX(0.74);transform-origin:0 0;color:#000">English</div>
<div class="a" style="left:717px;top:269px;width:18px;height:8px;background:#10246a"></div>
<div class="t" style="left:718px;top:268px;font-size:7px;line-height:9px;color:#000;-webkit-text-stroke:0;transform:scaleX(0.74);transform-origin:0 0;color:#fff">German</div>
<div class="t" style="left:718px;top:276px;font-size:7px;line-height:9px;color:#000;-webkit-text-stroke:0;transform:scaleX(0.74);transform-origin:0 0;color:#000">Greek</div>
<div class="t" style="left:718px;top:284px;font-size:7px;line-height:9px;color:#000;-webkit-text-stroke:0;transform:scaleX(0.74);transform-origin:0 0;color:#000">Hungarian</div>
<div class="t" style="left:718px;top:292px;font-size:7px;line-height:9px;color:#000;-webkit-text-stroke:0;transform:scaleX(0.74);transform-origin:0 0;color:#000">Italian</div>
<div class="t" style="left:718px;top:300px;font-size:7px;line-height:9px;color:#000;-webkit-text-stroke:0;transform:scaleX(0.74);transform-origin:0 0;color:#000">Norwegian</div>
<div class="t" style="left:718px;top:308px;font-size:7px;line-height:9px;color:#000;-webkit-text-stroke:0;transform:scaleX(0.74);transform-origin:0 0;color:#000">Polish</div>
<div class="t" style="left:718px;top:316px;font-size:7px;line-height:9px;color:#000;-webkit-text-stroke:0;transform:scaleX(0.74);transform-origin:0 0;color:#000">Russian</div>
<div class="t" style="left:718px;top:324px;font-size:7px;line-height:9px;color:#000;-webkit-text-stroke:0;transform:scaleX(0.74);transform-origin:0 0;color:#000">Spanish</div>
<div class="a" style="left:562px;top:393px;width:173px;height:1px;background:#8a8878"></div>
<div class="a" style="left:562px;top:394px;width:173px;height:1px;background:#fff"></div>
<div class="a" style="left:562px;top:396px;width:173px;height:1px;background:#8a8878"></div>
<div class="a" style="left:562px;top:434px;width:173px;height:1px;background:#8a8878"></div>
<div class="a" style="left:562px;top:435px;width:173px;height:1px;background:#fff"></div>
<div class="a" style="left:562px;top:437px;width:173px;height:1px;background:#8a8878"></div>
<div class="a" style="left:560px;top:397px;width:175px;height:9px;background:#e6e2d2"></div>
<div class="t" style="left:562px;top:396px;font-size:7px;line-height:9px;color:#000;-webkit-text-stroke:0;transform:scaleX(0.74);transform-origin:0 0;">Example</div>
<div class="a" style="left:560px;top:406px;width:175px;height:28px;background:#fff"></div>
<div class="a" style="left:560px;top:438px;width:175px;height:9px;background:#e6e2d2"></div>
<div class="t" style="left:560px;top:437px;font-size:7px;line-height:9px;color:#000;-webkit-text-stroke:0;transform:scaleX(0.74);transform-origin:0 0;">Notes</div>
<div class="a" style="left:560px;top:447px;width:175px;height:6px;background:#fff"></div>
</div>
<div class="a" style="left:357px;top:456px;width:388px;height:1px;background:#9a9088"></div>
<div class="a" style="left:357px;top:457px;width:388px;height:1px;background:#f8f4ee"></div>
<div class="a" style="left:357px;top:459px;width:388px;height:1px;background:#9a9088"></div>
<div class="a" style="left:357px;top:460px;width:388px;height:1px;background:#f8f4ee"></div>
<div class="t" style="left:349px;top:461px;font-size:10.5px">Example</div>
<div class="a" style="left:349px;top:476px;width:402px;height:21px;background:#fff;border-style:solid;border-width:1px;border-color:#a48c74 #f8f4ee #f8f4ee #a48c74"></div>
<div class="a" style="left:735px;top:477px;width:15px;height:10px;background:#ded4c8;border-style:solid;border-width:1px;border-color:#f8f4ee #3a3028 #3a3028 #f8f4ee"></div>
<div class="a" style="left:736px;top:478px;width:13px;height:8px;border-style:solid;border-width:1px;border-color:#ded4c8 #a48c74 #a48c74 #ded4c8"></div>
<div class="a" style="left:735px;top:487px;width:15px;height:9px;background:#ded4c8;border-style:solid;border-width:1px;border-color:#f8f4ee #3a3028 #3a3028 #f8f4ee"></div>
<div class="a" style="left:736px;top:488px;width:13px;height:7px;border-style:solid;border-width:1px;border-color:#ded4c8 #a48c74 #a48c74 #ded4c8"></div>
<div class="a" style="left:742px;top:482px;width:2px;height:2px;background:#000"></div>
<div class="a" style="left:742px;top:491px;width:2px;height:2px;background:#000"></div>
<div class="a" style="left:357px;top:498px;width:388px;height:1px;background:#9a9088"></div>
<div class="a" style="left:357px;top:499px;width:388px;height:1px;background:#f8f4ee"></div>
<div class="a" style="left:357px;top:501px;width:388px;height:1px;background:#9a9088"></div>
<div class="a" style="left:357px;top:502px;width:388px;height:1px;background:#f8f4ee"></div>
<div class="t" style="left:349px;top:503px;font-size:10.5px">Notes</div>
<div class="a" style="left:349px;top:518px;width:402px;height:21px;background:#fff;border-style:solid;border-width:1px;border-color:#a48c74 #f8f4ee #f8f4ee #a48c74"></div>
<div class="a" style="left:735px;top:519px;width:15px;height:10px;background:#ded4c8;border-style:solid;border-width:1px;border-color:#f8f4ee #3a3028 #3a3028 #f8f4ee"></div>
<div class="a" style="left:736px;top:520px;width:13px;height:8px;border-style:solid;border-width:1px;border-color:#ded4c8 #a48c74 #a48c74 #ded4c8"></div>
<div class="a" style="left:735px;top:529px;width:15px;height:9px;background:#ded4c8;border-style:solid;border-width:1px;border-color:#f8f4ee #3a3028 #3a3028 #f8f4ee"></div>
<div class="a" style="left:736px;top:530px;width:13px;height:7px;border-style:solid;border-width:1px;border-color:#ded4c8 #a48c74 #a48c74 #ded4c8"></div>
<div class="a" style="left:742px;top:524px;width:2px;height:2px;background:#000"></div>
<div class="a" style="left:742px;top:533px;width:2px;height:2px;background:#000"></div>
<div class="a" style="left:357px;top:542px;width:388px;height:1px;background:#9a9088"></div>
<div class="a" style="left:357px;top:543px;width:388px;height:1px;background:#f8f4ee"></div>
<div class="a" style="left:357px;top:545px;width:388px;height:1px;background:#9a9088"></div>
<div class="a" style="left:357px;top:546px;width:388px;height:1px;background:#f8f4ee"></div>
<div class="t" style="left:349px;top:547px;font-size:10.5px">Others</div>
<div class="a" style="left:349px;top:562px;width:402px;height:21px;background:#fff;border-style:solid;border-width:1px;border-color:#a48c74 #f8f4ee #f8f4ee #a48c74"></div>
<div class="a" style="left:735px;top:563px;width:15px;height:10px;background:#ded4c8;border-style:solid;border-width:1px;border-color:#f8f4ee #3a3028 #3a3028 #f8f4ee"></div>
<div class="a" style="left:736px;top:564px;width:13px;height:8px;border-style:solid;border-width:1px;border-color:#ded4c8 #a48c74 #a48c74 #ded4c8"></div>
<div class="a" style="left:735px;top:573px;width:15px;height:9px;background:#ded4c8;border-style:solid;border-width:1px;border-color:#f8f4ee #3a3028 #3a3028 #f8f4ee"></div>
<div class="a" style="left:736px;top:574px;width:13px;height:7px;border-style:solid;border-width:1px;border-color:#ded4c8 #a48c74 #a48c74 #ded4c8"></div>
<div class="a" style="left:742px;top:568px;width:2px;height:2px;background:#000"></div>
<div class="a" style="left:742px;top:577px;width:2px;height:2px;background:#000"></div>
<div class="t" style="left:349px;top:589px;font-size:10.5px">Document reference</div>
<div class="a" style="left:349px;top:604px;width:259px;height:18px;background:#fff;border-style:solid;border-width:1px;border-color:#a48c74 #f8f4ee #f8f4ee #a48c74;"></div>
<div class="a" style="left:350px;top:605px;width:257px;height:16px;border-style:solid;border-width:1px;border-color:#3a3028 #ded4c8 #ded4c8 #3a3028"></div>
<div class="a" style="left:614px;top:604px;width:39px;height:18px;background:#fff;border-style:solid;border-width:1px;border-color:#a48c74 #f8f4ee #f8f4ee #a48c74;"></div>
<div class="a" style="left:615px;top:605px;width:37px;height:16px;border-style:solid;border-width:1px;border-color:#3a3028 #ded4c8 #ded4c8 #3a3028"></div>
<div class="a" style="left:658px;top:604px;width:49px;height:18px;background:#fff;border-style:solid;border-width:1px;border-color:#a48c74 #f8f4ee #f8f4ee #a48c74;"></div>
<div class="a" style="left:659px;top:605px;width:47px;height:16px;border-style:solid;border-width:1px;border-color:#3a3028 #ded4c8 #ded4c8 #3a3028"></div>
<div class="a" style="left:711px;top:605px;width:13px;height:16px;background:#ded4c8;border-style:solid;border-width:1px;border-color:#f8f4ee #3a3028 #3a3028 #f8f4ee"></div>
<div class="a" style="left:712px;top:606px;width:11px;height:14px;border-style:solid;border-width:1px;border-color:#ded4c8 #a48c74 #a48c74 #ded4c8"></div>
<div class="a" style="left:724px;top:605px;width:14px;height:16px;background:#ded4c8;border-style:solid;border-width:1px;border-color:#f8f4ee #3a3028 #3a3028 #f8f4ee"></div>
<div class="a" style="left:725px;top:606px;width:12px;height:14px;border-style:solid;border-width:1px;border-color:#ded4c8 #a48c74 #a48c74 #ded4c8"></div>
<div class="a" style="left:738px;top:605px;width:14px;height:16px;background:#ded4c8;border-style:solid;border-width:1px;border-color:#f8f4ee #3a3028 #3a3028 #f8f4ee"></div>
<div class="a" style="left:739px;top:606px;width:12px;height:14px;border-style:solid;border-width:1px;border-color:#ded4c8 #a48c74 #a48c74 #ded4c8"></div>
<svg style="left:713px;top:609px" width="10" height="10"><rect x="0.5" y="5" width="8" height="3.5" fill="#f4f4f4" stroke="#666"/><rect x="1" y="8.5" width="8" height="1.2" fill="#888"/><path d="M3.5 6.5 L8 1.5" stroke="#e0b040" stroke-width="1.8"/><path d="M7.5 2 L8.8 0.6" stroke="#e06070" stroke-width="1.5"/><path d="M1.5 6.8h2" stroke="#f08020" stroke-width="1"/></svg>
<svg style="left:726px;top:608px" width="11" height="11"><circle cx="3.2" cy="3.2" r="2.6" fill="#1828c8"/><circle cx="7.2" cy="7" r="2.6" fill="#f0a010"/></svg>
<div class="a" style="left:739px;top:606px;width:12px;height:14px;overflow:hidden"><div class="t" style="left:-3px;top:0;font-size:11px;color:#000">Del</div></div>
<div class="t" style="left:763px;top:55px;font-size:10.5px">Name</div>
<div class="a" style="left:794px;top:53px;width:77px;height:17px;background:#fff;border-style:solid;border-width:1px;border-color:#a48c74 #f8f4ee #f8f4ee #a48c74;"></div>
<div class="a" style="left:795px;top:54px;width:75px;height:15px;border-style:solid;border-width:1px;border-color:#3a3028 #ded4c8 #ded4c8 #3a3028"></div>
<div class="t" style="left:798px;top:55px;font-size:10.5px;color:#000">languages</div>
<div class="a" style="left:871px;top:53px;width:13px;height:17px;background:#ded4c8;border-style:solid;border-width:1px;border-color:#f8f4ee #3a3028 #3a3028 #f8f4ee"></div>
<div class="a" style="left:872px;top:54px;width:11px;height:15px;border-style:solid;border-width:1px;border-color:#ded4c8 #a48c74 #a48c74 #ded4c8"></div>
<svg style="left:874px;top:58px" width="8" height="8"><circle cx="4" cy="4" r="3" fill="#d07010"/><path d="M1 2h3" stroke="#fff" stroke-width="1"/></svg>
<div class="t" style="left:763px;top:80px;font-size:10.5px">Topic</div>
<div class="a" style="left:794px;top:79px;width:90px;height:17px;background:#fff;border-style:solid;border-width:1px;border-color:#a48c74 #f8f4ee #f8f4ee #a48c74;"></div>
<div class="a" style="left:795px;top:80px;width:88px;height:15px;border-style:solid;border-width:1px;border-color:#3a3028 #ded4c8 #ded4c8 #3a3028"></div>
<div class="t" style="left:798px;top:81px;font-size:10.5px;color:#000">0</div>
<div class="t" style="left:763px;top:102px;font-size:10.5px">Resources</div>
<div class="a" style="left:764px;top:117px;width:120px;height:71px;background:#fff;border-style:solid;border-width:1px;border-color:#a48c74 #f8f4ee #f8f4ee #a48c74"></div>
<div class="a" style="left:765px;top:118px;width:30px;height:21px;background:#ded4c8;border-style:solid;border-width:1px;border-color:#f8f4ee #3a3028 #3a3028 #f8f4ee"></div>
<div class="a" style="left:766px;top:119px;width:28px;height:19px;border-style:solid;border-width:1px;border-color:#ded4c8 #a48c74 #a48c74 #ded4c8"></div>
<div class="a" style="left:795px;top:118px;width:80px;height:21px;background:#ded4c8;border-style:solid;border-width:1px;border-color:#f8f4ee #3a3028 #3a3028 #f8f4ee"></div>
<div class="a" style="left:796px;top:119px;width:78px;height:19px;border-style:solid;border-width:1px;border-color:#ded4c8 #a48c74 #a48c74 #ded4c8"></div>
<div class="a" style="left:875px;top:118px;width:8px;height:21px;background:#ded4c8;border-style:solid;border-width:1px;border-color:#f8f4ee #3a3028 #3a3028 #f8f4ee"></div>
<div class="a" style="left:876px;top:119px;width:6px;height:19px;border-style:solid;border-width:1px;border-color:#ded4c8 #a48c74 #a48c74 #ded4c8"></div>
<div class="t" style="left:769px;top:122px;font-size:10.5px">ID</div>
<div class="t" style="left:799px;top:122px;font-size:10.5px">Name</div>
<div class="a" style="left:876px;top:122px;width:7px;height:14px;overflow:hidden"><div class="t" style="left:2px;top:0;font-size:11px">C</div></div>
<div class="a" style="left:765px;top:172px;width:118px;height:15px;background:repeating-conic-gradient(#f4f0ea 0 25%,#e4dcd2 0 50%) 0 0/2px 2px"></div>
<div class="a" style="left:765px;top:172px;width:15px;height:15px;background:#ded4c8;border-style:solid;border-width:1px;border-color:#f8f4ee #3a3028 #3a3028 #f8f4ee"></div>
<div class="a" style="left:766px;top:173px;width:13px;height:13px;border-style:solid;border-width:1px;border-color:#ded4c8 #a48c74 #a48c74 #ded4c8"></div>
<div class="a" style="left:780px;top:172px;width:75px;height:15px;background:#ded4c8;border-style:solid;border-width:1px;border-color:#f8f4ee #3a3028 #3a3028 #f8f4ee"></div>
<div class="a" style="left:781px;top:173px;width:73px;height:13px;border-style:solid;border-width:1px;border-color:#ded4c8 #a48c74 #a48c74 #ded4c8"></div>
<div class="a" style="left:867px;top:172px;width:16px;height:15px;background:#ded4c8;border-style:solid;border-width:1px;border-color:#f8f4ee #3a3028 #3a3028 #f8f4ee"></div>
<div class="a" style="left:868px;top:173px;width:14px;height:13px;border-style:solid;border-width:1px;border-color:#ded4c8 #a48c74 #a48c74 #ded4c8"></div>
<svg style="left:770px;top:175px" width="5" height="9"><path d="M5 0v9L0 4.5z" fill="#000"/></svg>
<svg style="left:873px;top:175px" width="5" height="9"><path d="M0 0v9L5 4.5z" fill="#000"/></svg>
<div class="t" style="left:765px;top:195px;font-size:10.5px">Sub topics</div>
<div class="a" style="left:766px;top:209px;width:116px;height:20px;background:#ded4c8;border-style:solid;border-width:1px;border-color:#f8f4ee #3a3028 #3a3028 #f8f4ee"></div>
<div class="a" style="left:767px;top:210px;width:114px;height:18px;border-style:solid;border-width:1px;border-color:#ded4c8 #a48c74 #a48c74 #ded4c8"></div>
<svg style="left:771px;top:212px" width="12" height="12"><path d="M2.5 2 L5.5 5" stroke="#7a4008" stroke-width="4" stroke-linecap="round"/><path d="M2.5 2 L5.5 5" stroke="#f0a040" stroke-width="2.4" stroke-linecap="round"/><circle cx="2.5" cy="9.5" r="2.2" fill="#1020c0"/><circle cx="9" cy="9.5" r="2.2" fill="#40b020"/></svg>
<svg style="left:788px;top:212px" width="12" height="12"><path d="M9.5 2 L6.5 5" stroke="#7a4008" stroke-width="4" stroke-linecap="round"/><path d="M9.5 2 L6.5 5" stroke="#f0a040" stroke-width="2.4" stroke-linecap="round"/><circle cx="2.5" cy="9.5" r="2.2" fill="#1020c0"/><circle cx="6" cy="9.5" r="2.2" fill="#40b020"/></svg>
<div class="a" style="left:805px;top:211px;width:1px;height:15px;background:#a48c74"></div>
<div class="a" style="left:806px;top:211px;width:1px;height:15px;background:#f8f4ee"></div>
<svg style="left:811px;top:212px" width="10" height="12"><path d="M5 0.5 L9.5 5.5 H7 V11.5 H3 V5.5 H0.5 Z" fill="#b0aca8" stroke="#7a7670" stroke-width="1"/></svg>
<svg style="left:828px;top:212px" width="10" height="12"><path d="M5 11.5 L9.5 6.5 H7 V0.5 H3 V6.5 H0.5 Z" fill="#b0aca8" stroke="#7a7670" stroke-width="1"/></svg>
<svg style="left:844px;top:212px" width="12" height="12"><rect x="2" y="2" width="8" height="8" fill="#9a9690"/><path d="M1.5 1.5 L10.5 10.5 M10.5 1.5 L1.5 10.5" stroke="#6a6660" stroke-width="3.4"/><path d="M1.5 1.5 L10.5 10.5 M10.5 1.5 L1.5 10.5" stroke="#a8a4a0" stroke-width="1.6"/></svg>
<div class="a" style="left:766px;top:229px;width:116px;height:72px;background:#fff;border-style:solid;border-width:1px;border-color:#a48c74 #f8f4ee #f8f4ee #a48c74"></div>
<div class="t" style="left:763px;top:308px;font-size:10.5px">Descriptors</div>
<div class="a" style="left:764px;top:323px;width:120px;height:20px;background:#ded4c8;border-style:solid;border-width:1px;border-color:#f8f4ee #3a3028 #3a3028 #f8f4ee"></div>
<div class="a" style="left:765px;top:324px;width:118px;height:18px;border-style:solid;border-width:1px;border-color:#ded4c8 #a48c74 #a48c74 #ded4c8"></div>
<svg style="left:769px;top:326px" width="12" height="12"><path d="M2.5 2 L5.5 5" stroke="#7a4008" stroke-width="4" stroke-linecap="round"/><path d="M2.5 2 L5.5 5" stroke="#f0a040" stroke-width="2.4" stroke-linecap="round"/><circle cx="2.5" cy="9.5" r="2.2" fill="#1020c0"/><circle cx="9" cy="9.5" r="2.2" fill="#40b020"/></svg>
<svg style="left:786px;top:326px" width="12" height="12"><circle cx="3.5" cy="4" r="2.8" fill="#1828c0"/><circle cx="8" cy="8" r="3" fill="#f0a020" stroke="#a06010" stroke-width=".6"/></svg>
<div class="a" style="left:803px;top:325px;width:1px;height:15px;background:#a48c74"></div>
<div class="a" style="left:804px;top:325px;width:1px;height:15px;background:#f8f4ee"></div>
<svg style="left:809px;top:326px" width="12" height="12"><rect x="2" y="2" width="8" height="8" fill="#9a9690"/><path d="M1.5 1.5 L10.5 10.5 M10.5 1.5 L1.5 10.5" stroke="#6a6660" stroke-width="3.4"/><path d="M1.5 1.5 L10.5 10.5 M10.5 1.5 L1.5 10.5" stroke="#a8a4a0" stroke-width="1.6"/></svg>
<div class="a" style="left:764px;top:343px;width:118px;height:73px;background:#fff;border-style:solid;border-width:1px;border-color:#a48c74 #f8f4ee #f8f4ee #a48c74"></div>
<div class="t" style="left:765px;top:422px;font-size:10.5px">References</div>
<div class="a" style="left:766px;top:435px;width:116px;height:21px;background:#ded4c8;border-style:solid;border-width:1px;border-color:#f8f4ee #3a3028 #3a3028 #f8f4ee"></div>
<div class="a" style="left:767px;top:436px;width:114px;height:19px;border-style:solid;border-width:1px;border-color:#ded4c8 #a48c74 #a48c74 #ded4c8"></div>
<svg style="left:771px;top:439px" width="12" height="12"><path d="M2.5 2 L5.5 5" stroke="#7a4008" stroke-width="4" stroke-linecap="round"/><path d="M2.5 2 L5.5 5" stroke="#f0a040" stroke-width="2.4" stroke-linecap="round"/><circle cx="2.5" cy="9.5" r="2.2" fill="#1020c0"/><circle cx="9" cy="9.5" r="2.2" fill="#40b020"/></svg>
<svg style="left:788px;top:439px" width="12" height="12"><path d="M9.5 2 L6.5 5" stroke="#7a4008" stroke-width="4" stroke-linecap="round"/><path d="M9.5 2 L6.5 5" stroke="#f0a040" stroke-width="2.4" stroke-linecap="round"/><circle cx="2.5" cy="9.5" r="2.2" fill="#1020c0"/><circle cx="6" cy="9.5" r="2.2" fill="#40b020"/></svg>
<div class="a" style="left:805px;top:438px;width:1px;height:15px;background:#a48c74"></div>
<div class="a" style="left:806px;top:438px;width:1px;height:15px;background:#f8f4ee"></div>
<svg style="left:811px;top:439px" width="10" height="12"><path d="M5 0.5 L9.5 5.5 H7 V11.5 H3 V5.5 H0.5 Z" fill="#b0aca8" stroke="#7a7670" stroke-width="1"/></svg>
<svg style="left:828px;top:439px" width="10" height="12"><path d="M5 11.5 L9.5 6.5 H7 V0.5 H3 V6.5 H0.5 Z" fill="#b0aca8" stroke="#7a7670" stroke-width="1"/></svg>
<svg style="left:844px;top:439px" width="12" height="12"><rect x="2" y="2" width="8" height="8" fill="#9a9690"/><path d="M1.5 1.5 L10.5 10.5 M10.5 1.5 L1.5 10.5" stroke="#6a6660" stroke-width="3.4"/><path d="M1.5 1.5 L10.5 10.5 M10.5 1.5 L1.5 10.5" stroke="#a8a4a0" stroke-width="1.6"/></svg>
<div class="a" style="left:766px;top:456px;width:116px;height:72px;background:#fff;border-style:solid;border-width:1px;border-color:#a48c74 #f8f4ee #f8f4ee #a48c74"></div>
<div class="t" style="left:765px;top:537px;font-size:10.5px">Referenced_in</div>
<div class="a" style="left:766px;top:552px;width:116px;height:71px;background:#fff;border-style:solid;border-width:1px;border-color:#a48c74 #f8f4ee #f8f4ee #a48c74"></div>
<svg style="left:0;top:0" width="895" height="640"><g fill="none" stroke="#000" stroke-width="1.2"><path d="M94 222.5 L230.5 203.5"/><ellipse cx="248.5" cy="199" rx="18" ry="12.5" fill="#fff"/><path d="M105.5 341 L245.5 312"/><ellipse cx="263" cy="309" rx="17.5" ry="11" fill="#fff"/></g></svg>
<div class="t" style="left:244px;top:190px;font-size:13px;line-height:17px;color:#000">1</div>
<div class="t" style="left:258px;top:300px;font-size:13px;line-height:17px;color:#000">2</div>
<div class="a" style="left:344px;top:411px;width:5px;height:227px;background:linear-gradient(90deg,rgba(0,0,0,.5),rgba(0,0,0,.15) 60%,rgba(0,0,0,0))"></div>
<div class="a" style="left:176px;top:637px;width:172px;height:3px;background:linear-gradient(180deg,rgba(0,0,0,.35),rgba(0,0,0,0))"></div>
<div class="a" style="left:172px;top:409px;width:172px;height:228px;background:#ded4c8;border-style:solid;border-width:1px;border-color:#ded4c8 #3a3028 #3a3028 #ded4c8"></div>
<div class="a" style="left:173px;top:410px;width:170px;height:226px;border-style:solid;border-width:1px;border-color:#f8f4ee #a48c74 #a48c74 #f8f4ee"></div>
<div class="t" style="left:199px;top:416px;font-size:11px">Move left</div>
<div class="t" style="left:276px;top:416px;font-size:11px">Ctrl+Left</div>
<div class="t" style="left:199px;top:438px;font-size:11px">MoveRight</div>
<div class="t" style="left:276px;top:438px;font-size:11px">Ctrl+Right</div>
<div class="t" style="left:199px;top:460px;font-size:11px">Edit</div>
<div class="t" style="left:276px;top:460px;font-size:11px">F4</div>
<div class="t" style="left:199px;top:482px;font-size:11px">Insert</div>
<div class="t" style="left:276px;top:482px;font-size:11px">Ctrl+I</div>
<div class="t" style="left:199px;top:504px;font-size:11px">Append</div>
<div class="t" style="left:276px;top:504px;font-size:11px">Ctrl+A</div>
<div class="t" style="left:199px;top:526px;font-size:11px">Delete</div>
<div class="t" style="left:276px;top:526px;font-size:11px">Del</div>
<div class="t" style="left:199px;top:557px;font-size:11px">Refresh</div>
<div class="t" style="left:276px;top:557px;font-size:11px">Ctrl+R, L</div>
<div class="t" style="left:199px;top:578px;font-size:11px">RestoreDefaults</div>
<div class="t" style="left:199px;top:598px;font-size:11px">&hellip;more</div>
<div class="t" style="left:199px;top:618px;font-size:11px">&hellip;nav</div>
<div class="a" style="left:177px;top:547px;width:162px;height:1px;background:#a48c74"></div>
<div class="a" style="left:177px;top:548px;width:162px;height:1px;background:#f8f4ee"></div>
<svg style="left:328px;top:601px" width="5" height="9"><path d="M0 0v9L4.5 4.5z" fill="#000"/></svg>
<svg style="left:328px;top:621px" width="5" height="9"><path d="M0 0v9L4.5 4.5z" fill="#000"/></svg>
<svg style="left:176px;top:416px" width="17" height="14"><path d="M1 7 L7.5 1 V4.5 H16 V9.5 H7.5 V13 Z" fill="url(#gl)" stroke="#604000" stroke-width="1"/><defs><linearGradient id="gl" x1="0" x2="1"><stop offset="0" stop-color="#c08000"/><stop offset=".6" stop-color="#f8a030"/><stop offset="1" stop-color="#e09030"/></linearGradient></defs></svg>
<svg style="left:176px;top:438px" width="17" height="14"><path d="M16 7 L9.5 1 V4.5 H1 V9.5 H9.5 V13 Z" fill="url(#gr)" stroke="#604000" stroke-width="1"/><defs><linearGradient id="gr" x1="0" x2="1"><stop offset="0" stop-color="#f0a040"/><stop offset=".5" stop-color="#f8a030"/><stop offset="1" stop-color="#c08000"/></linearGradient></defs></svg>
<svg style="left:176px;top:459px" width="17" height="16"><rect x="0.5" y="8" width="15" height="6" fill="#f8f8f8" stroke="#666"/><rect x="0.5" y="13" width="15" height="2" fill="#888"/><path d="M4 11 L13 3" stroke="#a08050" stroke-width="2"/><path d="M12.5 3.5 L14.5 1.5" stroke="#e04050" stroke-width="2"/><path d="M2 11h5" stroke="#e08020" stroke-width="1"/></svg>
<svg style="left:176px;top:480px" width="18" height="18"><defs><radialGradient id="bb" cx=".35" cy=".35" r=".7"><stop offset="0" stop-color="#6070ff"/><stop offset="1" stop-color="#0010a0"/></radialGradient><radialGradient id="bg" cx=".35" cy=".35" r=".7"><stop offset="0" stop-color="#a0f070"/><stop offset="1" stop-color="#30a010"/></radialGradient></defs><path d="M3.5 3 L8 7.5" stroke="#7a4008" stroke-width="6" stroke-linecap="round"/><path d="M3.5 3 L8 7.5" stroke="#f0a040" stroke-width="4" stroke-linecap="round"/><circle cx="8.3" cy="7.8" r="1.6" fill="#f8c070"/><circle cx="3.5" cy="13.5" r="3.2" fill="url(#bb)"/><circle cx="14" cy="13.5" r="3.2" fill="url(#bg)"/></svg>
<svg style="left:176px;top:502px" width="18" height="18"><path d="M14.5 4 L10 8.5" stroke="#7a4008" stroke-width="6" stroke-linecap="round"/><path d="M14.5 4 L10 8.5" stroke="#f0a040" stroke-width="4" stroke-linecap="round"/><circle cx="3.5" cy="14" r="3.2" fill="url(#bb)"/><circle cx="9" cy="13.5" r="3.2" fill="url(#bg)"/></svg>
<svg style="left:175px;top:524px" width="19" height="19"><rect x="1" y="1" width="17" height="17" fill="#b8b0a8" opacity=".5"/><path d="M3.5 3 L15 16 M14.5 2.5 L3.5 16" stroke="#a03c00" stroke-width="5.5" stroke-linecap="round"/><path d="M3.5 3 L15 16 M14.5 2.5 L3.5 16" stroke="#ff7010" stroke-width="3.8" stroke-linecap="round"/></svg>
<svg style="left:176px;top:556px" width="17" height="17"><rect x="0.8" y="0.8" width="15.4" height="15.4" rx="4" fill="#fff" stroke="#b07030" stroke-width="1.4"/><path d="M3.5 7.5 C4 3.5 10.5 2.5 12.5 5.5" fill="none" stroke="#111" stroke-width="1.8"/><path d="M13.5 9.5 C12.5 13.5 6 14 4 11" fill="none" stroke="#111" stroke-width="1.8"/><path d="M10 6 L13.5 6.5 L13.5 2.5Z M7 11 L3.5 10.5 L3.5 14.5Z" fill="#111"/><path d="M5.5 8.5 C7 7.5 10 7.5 11.5 8.5" stroke="#f08010" stroke-width="1.6" fill="none"/></svg>
</body></html>
